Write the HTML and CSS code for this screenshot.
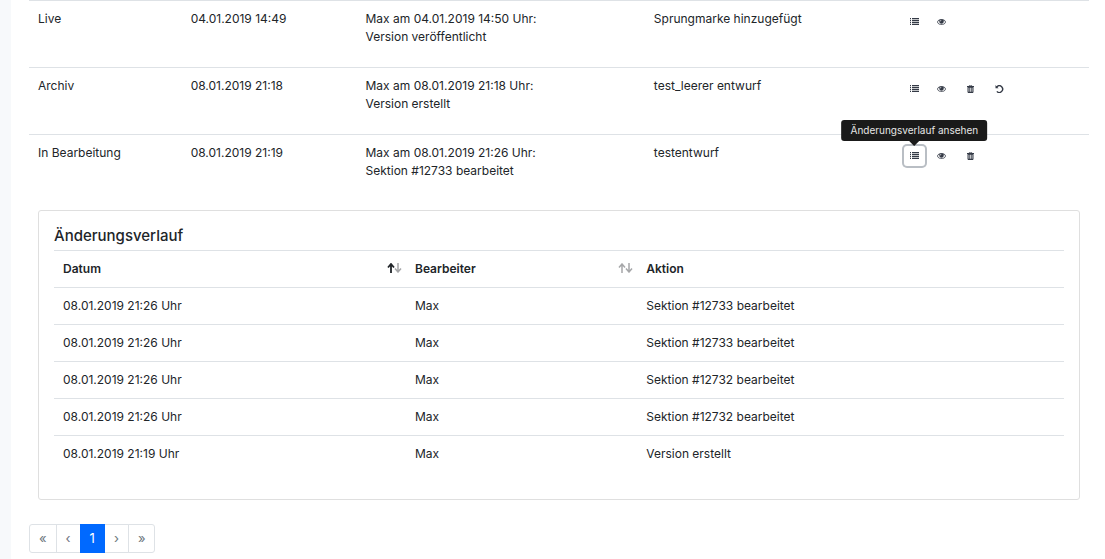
FILE: index.html
```html
<!DOCTYPE html>
<html lang="de">
<head>
    <meta charset="UTF-8">
    <meta name="viewport" content="width=device-width, initial-scale=1.0">
    <title>Versionen</title>
    <link rel="stylesheet" href="styles.css">
</head>
<body>

    <!-- Icons -->
    <svg class="icon-sprite" aria-hidden="true">
        <symbol id="icon-list" viewBox="0 0 9 8">
            <path d="M0 0h1v1H0zM2 0h7v1H2zM0 2h1v1H0zM2 2h7v1H2zM0 4h1v1H0zM2 4h7v1H2zM0 6h1v1H0zM2 6h7v1H2z"/>
            <path opacity=".3" d="M0 1h1v1H0zM2 1h7v1H2zM0 3h1v1H0zM2 3h7v1H2zM0 5h1v1H0zM2 5h7v1H2z"/>
        </symbol>
        <symbol id="icon-eye" viewBox="0 0 18 16">
            <path fill-rule="evenodd" d="M9 2C5 2 2 4.500 0 8c2 3.500 5 6 9 6s7-2.500 9-6c-2-3.500-5-6-9-6zM5.200 4.600A4.500 4.500 0 0 0 4.500 7a4.500 4.500 0 0 0 9 0 4.500 4.500 0 0 0-.7-2.400C14.400 5.300 15.600 6.500 16.500 8c-1.700 2.700-4.300 4.700-7.500 4.700S3.200 10.700 1.500 8c.9-1.500 2.100-2.700 3.700-3.400zM9 3.600A3.400 3.400 0 0 0 5.700 7h1A2.300 2.300 0 0 1 9 4.600z"/>
        </symbol>
        <symbol id="icon-trash" viewBox="0 0 14 16">
            <path fill-rule="evenodd" d="M4.500 0h5l1 2H14v2h-1v10l-1 2H2l-1-2V4H0V2h3.500zM5 1.200L4.600 2h4.800L9 1.200zM3.200 5.500v8h1.400v-8zM6.300 5.500v8h1.400v-8zM9.400 5.500v8h1.400v-8z"/>
        </symbol>
        <symbol id="icon-undo" viewBox="0 0 16 16">
            <path d="M0 0l2 2.400a8 8 0 1 1-.3 11.200l2-1.800A5.200 5.200 0 1 0 4 4.400L6.200 6.500H0z"/>
        </symbol>
        <symbol id="icon-up" viewBox="0 0 8 10">
            <path d="M4 10V1M1 4.500L4 1l3 3.500"/>
        </symbol>
        <symbol id="icon-down" viewBox="0 0 8 10">
            <path d="M4 0v9M1 5.500L4 9l3-3.500"/>
        </symbol>
    </svg>

    <main class="content">

        <!-- Versions -->
        <table class="table versions">
            <colgroup>
                <col class="col-status">
                <col class="col-created">
                <col class="col-changed">
                <col class="col-comment">
                <col>
            </colgroup>
            <tbody>
                <tr>
                    <td>Live</td>
                    <td>04.01.2019 14:49</td>
                    <td>Max am 04.01.2019 14:50 Uhr:<br>Version veröffentlicht</td>
                    <td>Sprungmarke hinzugefügt</td>
                    <td>
                        <div class="actions">
                            <button type="button" class="btn" aria-label="Änderungsverlauf ansehen"><svg class="icon"><use href="#icon-list"/></svg></button>
                            <button type="button" class="btn" aria-label="Ansehen"><svg class="icon"><use href="#icon-eye"/></svg></button>
                        </div>
                    </td>
                </tr>
                <tr>
                    <td>Archiv</td>
                    <td>08.01.2019 21:18</td>
                    <td>Max am 08.01.2019 21:18 Uhr:<br>Version erstellt</td>
                    <td>test_leerer entwurf</td>
                    <td>
                        <div class="actions">
                            <button type="button" class="btn" aria-label="Änderungsverlauf ansehen"><svg class="icon"><use href="#icon-list"/></svg></button>
                            <button type="button" class="btn" aria-label="Ansehen"><svg class="icon"><use href="#icon-eye"/></svg></button>
                            <button type="button" class="btn btn-edit" aria-label="Löschen"><svg class="icon"><use href="#icon-trash"/></svg></button>
                            <button type="button" class="btn btn-edit" aria-label="Wiederherstellen"><svg class="icon"><use href="#icon-undo"/></svg></button>
                        </div>
                    </td>
                </tr>
                <tr>
                    <td>In Bearbeitung</td>
                    <td>08.01.2019 21:19</td>
                    <td>Max am 08.01.2019 21:26 Uhr:<br>Sektion #12733 bearbeitet</td>
                    <td>testentwurf</td>
                    <td>
                        <div class="actions">
                            <button type="button" class="btn active" aria-describedby="history-tip" aria-label="Änderungsverlauf">
                                <svg class="icon"><use href="#icon-list"/></svg>
                                <span class="tip" id="history-tip" role="tooltip">Änderungsverlauf ansehen</span>
                            </button>
                            <button type="button" class="btn" aria-label="Ansehen"><svg class="icon"><use href="#icon-eye"/></svg></button>
                            <button type="button" class="btn btn-edit" aria-label="Löschen"><svg class="icon"><use href="#icon-trash"/></svg></button>
                        </div>
                    </td>
                </tr>
                <tr class="details">
                    <td colspan="5">
                        <!-- Change history -->
                        <div class="card">
                            <h5>Änderungsverlauf</h5>
                            <table class="table history">
                                <colgroup>
                                    <col class="col-date">
                                    <col class="col-editor">
                                    <col>
                                </colgroup>
                                <thead>
                                    <tr>
                                        <th aria-sort="ascending"><div class="sort">Datum <span class="arrows"><svg class="on"><use href="#icon-up"/></svg><svg><use href="#icon-down"/></svg></span></div></th>
                                        <th><div class="sort">Bearbeiter <span class="arrows"><svg><use href="#icon-up"/></svg><svg><use href="#icon-down"/></svg></span></div></th>
                                        <th>Aktion</th>
                                    </tr>
                                </thead>
                                <tbody>
                                    <tr>
                                        <td>08.01.2019 21:26 Uhr</td>
                                        <td>Max</td>
                                        <td>Sektion #12733 bearbeitet</td>
                                    </tr>
                                    <tr>
                                        <td>08.01.2019 21:26 Uhr</td>
                                        <td>Max</td>
                                        <td>Sektion #12733 bearbeitet</td>
                                    </tr>
                                    <tr>
                                        <td>08.01.2019 21:26 Uhr</td>
                                        <td>Max</td>
                                        <td>Sektion #12732 bearbeitet</td>
                                    </tr>
                                    <tr>
                                        <td>08.01.2019 21:26 Uhr</td>
                                        <td>Max</td>
                                        <td>Sektion #12732 bearbeitet</td>
                                    </tr>
                                    <tr>
                                        <td>08.01.2019 21:19 Uhr</td>
                                        <td>Max</td>
                                        <td>Version erstellt</td>
                                    </tr>
                                </tbody>
                            </table>
                        </div>
                    </td>
                </tr>
            </tbody>
        </table>

        <!-- Pagination -->
        <nav aria-label="Seiten">
            <ul class="pagination">
                <li><button type="button" disabled>«</button></li>
                <li><button type="button" disabled>‹</button></li>
                <li><a class="current" href="#" aria-current="page">1</a></li>
                <li><button type="button" disabled>›</button></li>
                <li><button type="button" disabled>»</button></li>
            </ul>
        </nav>

    </main>

</body>
</html>
```
FILE: styles.css
```css
* {
    box-sizing: border-box;
}
body {
    margin: 0;
    padding-left: 11px;
    background-color: #f7f9fb;
    color: #212529;
    font-family: Inter, "Liberation Sans", sans-serif;
    font-size: 12px;
    line-height: 18px;
}
.icon-sprite {
    display: none;
}
.content {
    padding: 0 16px 6px 18px;
    background-color: #fff;
}
.table {
    width: 100%;
    border-collapse: separate;
    border-spacing: 0;
    table-layout: fixed;
}
.table th, .table td {
    padding: 9px;
    border-top: 1px solid #dee2e6;
    text-align: left;
    vertical-align: top;
}
.versions > tbody > tr {
    height: 67px;
}
.versions > tbody > .details > td {
    border-top: 0;
}
.col-status {
    width: 14.4%;
}
.col-created {
    width: 16.5%;
}
.col-changed {
    width: 27.2%;
}
.col-comment {
    width: 23.4%;
}

/* row buttons */
.actions {
    display: flex;
    gap: 6px;
    padding: 2px;
}
.btn {
    position: relative;
    display: flex;
    align-items: center;
    justify-content: center;
    width: 21px;
    height: 20px;
    padding: 0;
    border: 0;
    border-radius: 3px;
    background-color: #fff;
    color: #343a46;
    font-family: inherit;
}
.btn.active {
    box-shadow: 0 0 0 2px #b9bec4;
}
.btn-edit {
    margin-left: 2px;
}
.icon {
    width: 9px;
    height: 8px;
    fill: currentColor;
}
.tip {
    position: absolute;
    bottom: 100%;
    left: 50%;
    margin-bottom: 5px;
    padding: 3px 9px;
    border-radius: 3px;
    background-color: #1a1a1a;
    color: #e6e6e6;
    font-size: 10px;
    line-height: 15px;
    white-space: nowrap;
    transform: translateX(-50%);
}
.tip::after {
    content: "";
    position: absolute;
    top: 100%;
    left: 50%;
    margin-left: -5px;
    border: 5px solid transparent;
    border-top-color: #1a1a1a;
    border-bottom: 0;
}

/* history */
.card {
    padding: 15px;
    border: 1px solid #dfdfdf;
    border-radius: 3px;
}
.card h5 {
    margin: 0 0 4px;
    font-size: 15px;
    font-weight: 500;
    line-height: 20px;
}
.history {
    margin-bottom: 12px;
}
.col-date {
    width: 34.85%;
}
.col-editor {
    width: 22.9%;
}
.sort {
    display: flex;
    justify-content: space-between;
}
.history th {
    font-weight: 600;
}
.arrows {
    display: flex;
    align-items: center;
    margin-right: -4px;
    padding-bottom: 2px;
}
.arrows svg {
    width: 8px;
    height: 10px;
    margin-right: -1px;
    fill: none;
    stroke: #a6a7a9;
    stroke-width: 1.5;
}
.arrows svg.on {
    stroke: #212529;
    stroke-width: 1.8;
}

/* pagination */
.pagination {
    display: flex;
    margin: 15px 0 0;
    padding: 0;
    list-style: none;
}
.pagination li + li {
    margin-left: -1px;
}
.pagination a, .pagination button {
    display: block;
    height: 29px;
    padding: 4px 9px;
    border: 1px solid #dee2e6;
    background-color: #fff;
    color: #6c757d;
    font-family: inherit;
    font-size: 13px;
    line-height: 19px;
    text-decoration: none;
}
.pagination .current {
    position: relative;
    border-color: #0069ff;
    background-color: #0069ff;
    color: #fff;
}
.pagination li:first-child button {
    border-radius: 3px 0 0 3px;
}
.pagination li:last-child button {
    border-radius: 0 3px 3px 0;
}
```
